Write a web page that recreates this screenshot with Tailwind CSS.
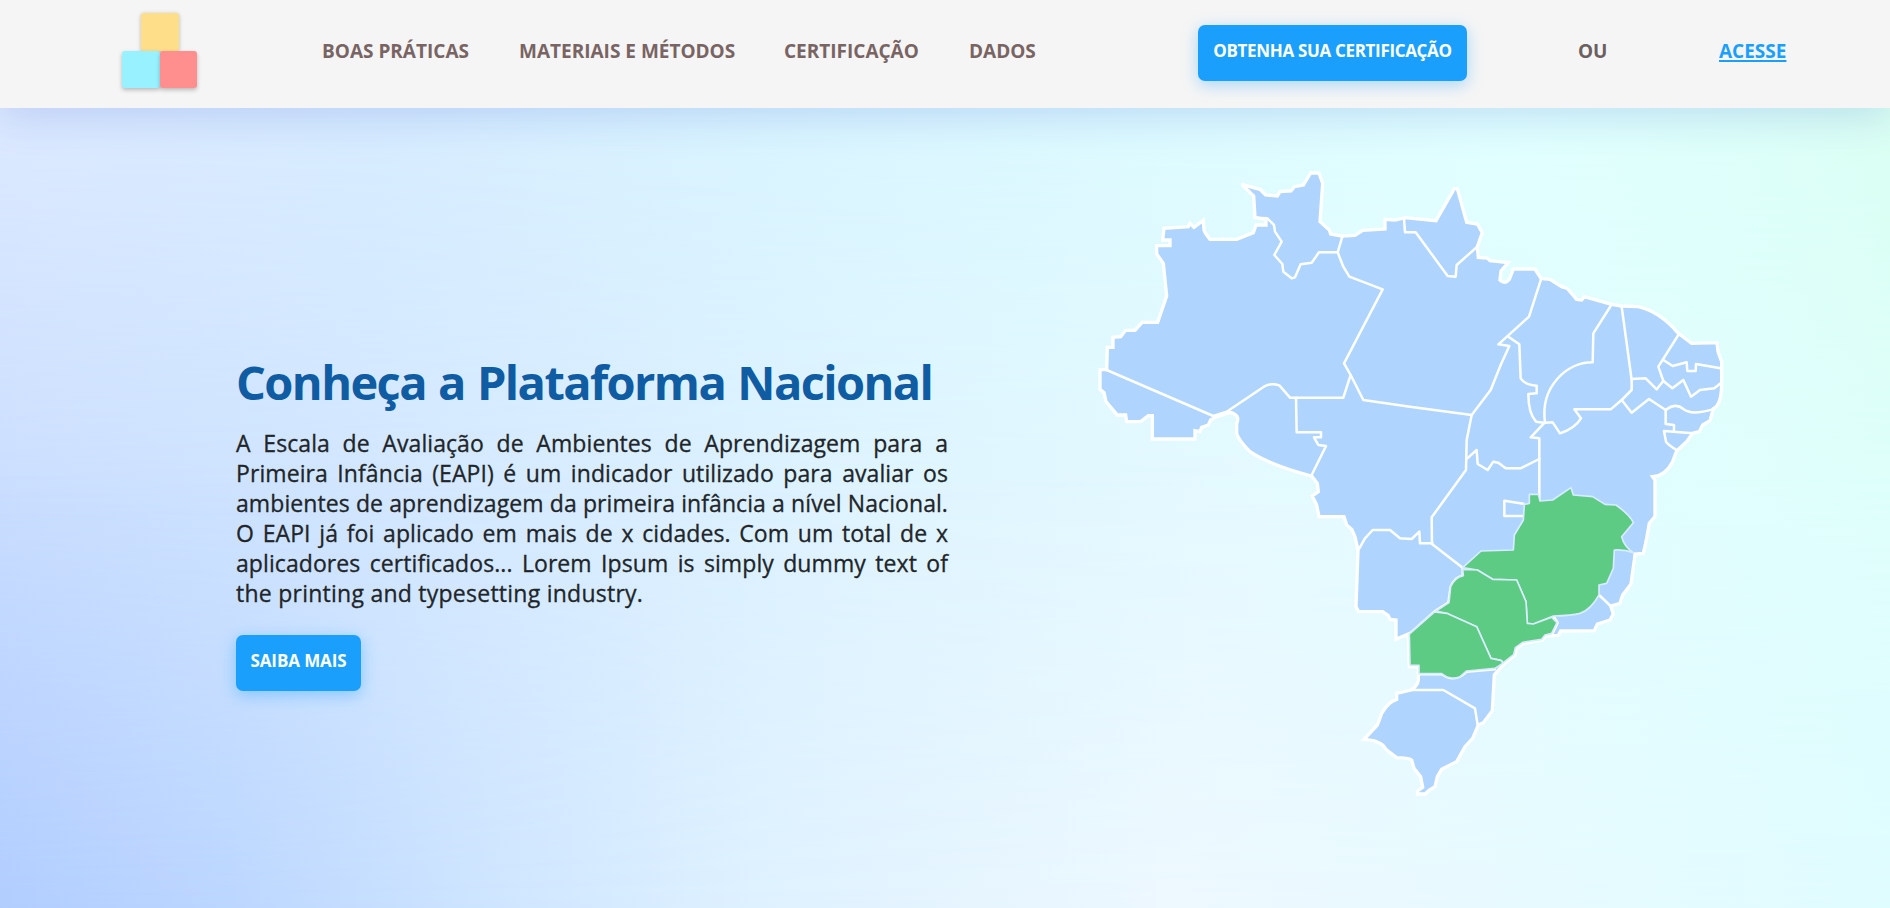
<!DOCTYPE html>
<html lang="pt-BR">
<head>
<meta charset="utf-8">
<title>Plataforma Nacional EAPI</title>
<script src="https://cdn.jsdelivr.net/npm/@tailwindcss/browser@4"></script>
</head>
<body class="relative isolate h-[908px] overflow-hidden flex flex-col font-['Open_Sans','Noto_Sans',sans-serif] text-[#212529] bg-[linear-gradient(90deg,#cadeff_0%,#cee3ff_12%,#d6eaff_25%,#dff4ff_45%,#e5faff_65%,#e2feff_85%,#dffffc_100%)]">
<!-- background tint layers -->
<div class="absolute inset-0 -z-10 bg-[linear-gradient(90deg,#dce9ff_0%,#d7ecff_20%,#d9f4ff_40%,#dcfaff_60%,#e0ffff_80%,#dcfff8_94%,#dafff2_100%)] [mask-image:linear-gradient(180deg,black_12%,transparent_58%)]"></div>
<div class="absolute inset-0 -z-10 bg-[linear-gradient(90deg,#b1cdff_0%,#bbd6ff_12%,#cde4ff_25%,#def1ff_40%,#edf8ff_62%,#e7faff_80%,#dffcff_100%)] [mask-image:linear-gradient(180deg,transparent_52%,black_100%)]"></div>

<header class="relative h-[108px] shrink-0 bg-[#f5f5f5] flex items-start shadow-[0_8px_40px_rgba(40,80,200,0.18)]">
  <div class="ml-[122px] mt-[13px] w-[75px] flex flex-wrap justify-center">
    <div class="w-[38px] h-[38px] rounded-[3px] bg-[#ffde89] shadow-[0_1px_4px_rgba(0,0,0,0.25)]"></div>
    <div class="w-full flex">
      <div class="flex-1 h-[37px] rounded-[3px] bg-[#98f1ff] shadow-[0_2px_4px_rgba(0,0,0,0.25)]"></div>
      <div class="flex-1 h-[37px] rounded-[3px] bg-[#ff8e8e] shadow-[0_2px_4px_rgba(0,0,0,0.25)]"></div>
    </div>
  </div>
  <nav class="ml-[125px] mt-[38px] flex gap-[50px] text-[19px] leading-[26px] font-bold text-[#796464] whitespace-nowrap">
    <a class="w-[147px]">BOAS PRÁTICAS</a>
    <a class="w-[215px]">MATERIAIS E MÉTODOS</a>
    <a class="w-[135px]">CERTIFICAÇÃO</a>
    <a class="w-[67px]">DADOS</a>
  </nav>
  <button class="ml-[162px] mt-[25px] w-[269px] h-[56px] pb-[4px] rounded-[7px] bg-[#1a9ffc] text-white text-[17px] leading-[24px] font-bold tracking-[-0.33px] whitespace-nowrap shadow-[0_4px_16px_rgba(26,159,252,0.35)]">OBTENHA SUA CERTIFICAÇÃO</button>
  <span class="ml-[111px] mt-[38px] w-[28px] text-[19px] leading-[26px] font-bold text-[#6b5f5f]">OU</span>
  <a class="ml-[113px] mt-[38px] text-[19px] leading-[26px] font-bold text-[#1a9ffc] underline decoration-2 underline-offset-2">ACESSE</a>
</header>

<main class="flex-1 flex items-start">
  <section class="ml-[236px] w-[712px] pt-[242px]">
    <h1 class="text-[47px] leading-[64px] font-bold text-[#0f5ca3] whitespace-nowrap tracking-[-1.6px] [word-spacing:1.5px]">Conheça a Plataforma Nacional</h1>
    <p class="mt-[14px] text-[23px] leading-[30px] whitespace-nowrap tracking-[0.08px] [-webkit-text-stroke:0.3px_#212529]">
      <span class="block [text-align-last:justify]">A Escala de Avaliação de Ambientes de Aprendizagem para a</span>
      <span class="block [text-align-last:justify]">Primeira Infância (EAPI) é um indicador utilizado para avaliar os</span>
      <span class="block [text-align-last:justify]">ambientes de aprendizagem da primeira infância a nível Nacional.</span>
      <span class="block [text-align-last:justify]">O EAPI já foi aplicado em mais de x cidades. Com um total de x</span>
      <span class="block [text-align-last:justify]">aplicadores certificados... Lorem Ipsum is simply dummy text of</span>
      <span class="block tracking-[0.25px]">the printing and typesetting industry.</span>
    </p>
    <button class="mt-[27px] w-[125px] h-[56px] pb-[4px] rounded-[7px] bg-[#1a9ffc] text-white text-[17px] leading-[24px] font-bold whitespace-nowrap tracking-[-0.1px] shadow-[0_4px_16px_rgba(26,159,252,0.4)]">SAIBA MAIS</button>
  </section>

  <svg class="ml-[132px] mt-[42px] w-[660px] h-[660px] shrink-0" viewBox="0 0 1980 1980" fill="none" stroke="#fff" stroke-linejoin="round" stroke-linecap="round">
    <!-- country outline -->
    <path fill="#afd5ff" stroke-width="10" stroke-linejoin="miter" stroke-miterlimit="3" d="M60 659L80 659 82 592 99 592 99 562 122 560 137 541 165 541 186 517 233 517 260 438 250 340 230 312 230 287 270 287 270 270 248 270 252 235 325 230 330 220 342 232 370 211 372 240Q375 250 390 268L470 268 520 248 528 225 558 225 558 208 525 203 521 138 485 103 540 118 557 135 592 138 600 125 633 123 643 110 670 105 692 69 717 69 728 100 720 215 748 240 752 252 785 258 825 256 848 241 915 237 915 208 945 210 975 203 1068 212 1123 116 1132 116 1160 217 1192 222 1207 248 1192 290 1195 322 1222 324 1230 332 1285 338 1263 363 1260 390Q1275 405 1288 388L1300 357 1365 357 1383 385 1410 388 1445 410 1462 415 1490 448 1505 450 1513 440 1595 463 1625 468 1675 470Q1740 485 1795 550L1835 580 1911 578 1914 605 1925 635 1925 700Q1925 765 1900 776L1890 812 1868 825 1858 845 1838 850 1820 875 1790 903 1778 935Q1755 978 1718 980L1725 990 1725 1100 1708 1120 1700 1165 1690 1210 1665 1212 1663 1230 1653 1302 1628 1335 1620 1360 1592 1368 1600 1392 1590 1410 1552 1422 1543 1442 1442 1443 1435 1456 1395 1458 1388 1470 1330 1480 1310 1495 1305 1515 1272 1542 1243 1575 1237 1682 1210 1718 1195 1725 1178 1765 1155 1790 1130 1835 1085 1858 1072 1880 1065 1910 1048 1920 1035 1932 1012 1932 1014 1922 1028 1912 1022 1880 1002 1855 995 1830Q985 1823 950 1823L920 1800 908 1785Q890 1770 852 1768L892 1725 905 1690Q925 1655 950 1648L950 1630 993 1620Q1013 1608 1015 1590L1015 1550 988 1550 985 1452 948 1468 948 1410 930 1408 925 1397 908 1385 835 1384 828 1370 834 1200 825 1160 815 1138 800 1125 792 1100 717 1100 710 1065 697 1038 715 1025 712 1000 695 978Q570 945 510 905Q475 870 470 850L470 820Q482 795 450 787L410 800 392 810 385 825 365 832 360 845 345 842 345 867 217 867 217 797 205 797 182 815 140 815 137 795 112 795 78 755 72 728 60 718Z"/>
    <!-- state borders -->
    <g stroke-width="7.5">
      <path d="M80 660L400 798 440 785 555 708Q575 698 598 706L630 743 790 743 812 675 792 640 908 418 808 380 790 350 773 307 787 260"/>
      <path d="M773 307L717 307 695 338 662 343 645 382 635 385 610 365 607 342 583 315 605 275 585 245 582 225 562 205 525 203"/>
      <path d="M648 743L650 847 723 847 723 862 702 862 715 885 738 888 695 975"/>
      <path d="M812 675L850 750 990 770 1175 795"/>
      <path d="M972 205L975 247 1007 247 1103 378 1127 380 1130 345 1192 290"/>
      <path d="M1383 388L1347 500 1255 583 1288 588 1262 645 1232 720 1175 795 1160 870 1158 960 1055 1102 1056 1182 1148 1253"/>
      <path d="M1285 560L1318 583 1322 685Q1335 705 1370 707L1370 730 1345 732Q1345 790 1368 815L1392 818"/>
      <path d="M1592 468L1540 550 1538 637C1460 637 1380 710 1395 818L1418 817 1440 850Q1485 835 1503 805L1483 778 1592 778 1625 750 1655 720 1655 690 1625 470"/>
      <path d="M1392 820L1352 862 1378 865 1378 1055"/>
      <path d="M1655 687L1697 685 1730 718 1750 693 1735 650 1795 555"/>
      <path d="M1750 630L1778 648 1820 637 1822 663 1847 663 1848 642 1922 655"/>
      <path d="M1750 693L1777 715 1810 690 1833 740 1860 720 1903 715 1922 700"/>
      <path d="M1625 750L1655 788 1707 747 1757 780Q1787 757 1810 777Q1835 797 1898 778"/>
      <path d="M1757 780L1757 822 1782 825 1782 840M1838 850L1752 843 1758 875Q1765 885 1790 900"/>
      <path d="M1162 925L1190 900 1193 942 1223 960 1240 935 1255 938 1277 955 1322 955 1378 927"/>
      <path d="M1330 1061L1273 1052 1273 1098 1330 1098"/>
      <path d="M838 1195L855 1165 878 1140 930 1140 960 1165 995 1167 1018 1145 1020 1180 1057 1180"/>
      <path d="M993 1620L1090 1620 1185 1675 1193 1725"/>
      <path d="M1557 1335L1592 1368"/>
      <path d="M988 1452L1063 1385 1105 1358 1112 1310Q1125 1280 1148 1277L1148 1255"/>
      <path d="M1017 1573L1085 1573Q1125 1600 1160 1565L1245 1558"/>
      <path d="M1420 1398L1433 1418 1418 1450"/>
    </g>
    <!-- highlighted states: Minas Gerais, São Paulo, Paraná -->
    <g fill="#5dcb83" stroke="#d9ecff" stroke-width="5">
      <path d="M1148 1253L1203 1203 1300 1200 1303 1155 1330 1110 1333 1063 1348 1060 1348 1033 1375 1033 1380 1053 1418 1050 1473 1013 1480 1035 1538 1040 1575 1063 1608 1065Q1650 1095 1660 1118L1625 1160Q1632 1190 1660 1208Q1635 1198 1603 1200L1600 1255 1580 1300 1557 1305 1557 1335Q1532 1380 1500 1390Q1475 1397 1420 1398L1360 1422 1342 1420 1338 1355 1310 1290 1238 1288 1192 1260Z"/>
      <path d="M1148 1258L1192 1260 1238 1288 1310 1290 1338 1355 1342 1420 1360 1422 1415 1402 1431 1418 1415 1450 1395 1455 1385 1468 1328 1477 1306 1493 1301 1514 1270 1538 1260 1530 1233 1525 1190 1430 1100 1390 1068 1383 1107 1358 1112 1310Q1125 1282 1150 1277Z"/>
      <path d="M1063 1386L1100 1390 1190 1430 1233 1525 1265 1532 1268 1540 1245 1555 1160 1563 1140 1580Q1110 1592 1085 1571L1017 1571 1017 1546 990 1546 988 1452Z"/>
    </g>
  </svg>
</main>
</body>
</html>
